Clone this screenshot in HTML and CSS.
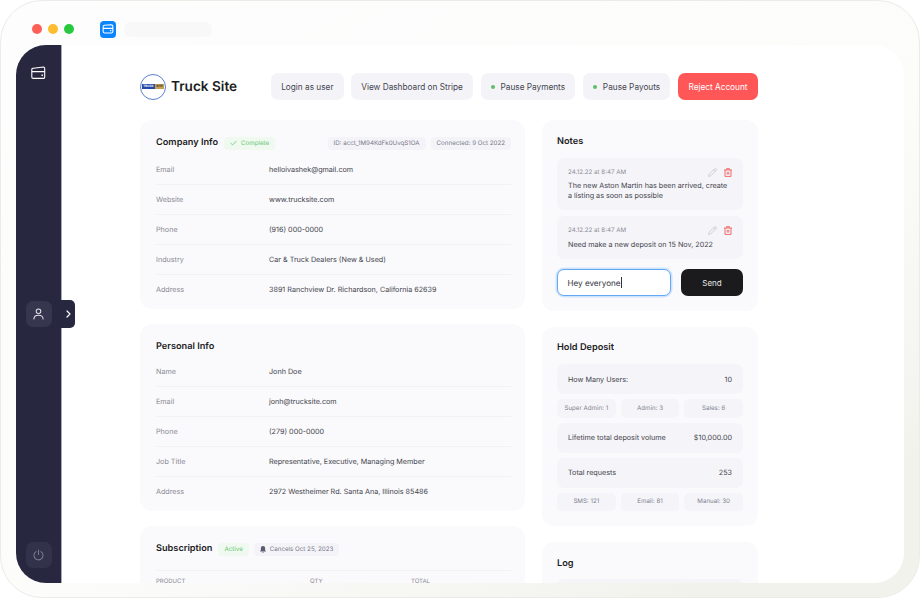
FILE: index.html
```html
<!DOCTYPE html>
<html lang="en">
<head>
<meta charset="utf-8">
<title>Truck Site</title>
<link rel="stylesheet" href="styles.css">
</head>
<body>
<div class="frame">
  <div class="topbar">
    <span class="light red"></span><span class="light yellow"></span><span class="light green"></span>
    <span class="app-icon">
      <svg width="12" height="10" viewBox="0 0 14 12" fill="none" stroke="#fff" stroke-width="1.3"><path d="M2.5 1.5 L11 1 A1.8 1.8 0 0 1 12.8 2.8 V9 A1.8 1.8 0 0 1 11 10.7 H3 A1.8 1.8 0 0 1 1.2 9 V3.3 A1.8 1.8 0 0 1 2.5 1.5 Z M1.2 5.2 H12.8"/><path d="M9.5 8 H11" stroke-width="1.5"/></svg>
    </span>
    <span class="url"></span>
  </div>
  <div class="panel">
    <aside class="sidebar">
      <svg class="side-card" width="15" height="14" viewBox="0 0 15 14" fill="none" stroke="#fff" stroke-width="1.1"><path d="M2.4 2.2 L12.3 1 A1.4 1.4 0 0 1 13.7 2.4 V11 A1.4 1.4 0 0 1 12.3 12.4 H2.2 A1.4 1.4 0 0 1 .8 11 V3.6 A1.4 1.4 0 0 1 2.4 2.2 Z M.8 5.6 H13.7"/><path d="M10.5 9.3 H12" stroke-width="1.4"/></svg>
      <span class="tile">
        <svg width="11" height="12" viewBox="0 0 12 13" fill="none" stroke="#e4e4ee" stroke-width="1.1"><circle cx="6" cy="3.6" r="2.5"/><path d="M1 12 C1 9 3 7.8 6 7.8 C9 7.8 11 9 11 12" stroke-linecap="round"/></svg>
      </span>
      <span class="tile tile-dim">
        <svg width="11" height="12" viewBox="0 0 11 12" fill="none" stroke="#77778c" stroke-width="1.1" stroke-linecap="round"><path d="M5.5 1 V5.5"/><path d="M3 2.6 A4.5 4.5 0 1 0 8 2.6"/></svg>
      </span>
      <span class="side-tab">
        <svg width="5" height="8" viewBox="0 0 5 8" fill="none" stroke="#fff" stroke-width="1.2" stroke-linecap="round" stroke-linejoin="round"><path d="M1 1 L4 4 L1 7"/></svg>
      </span>
    </aside>
    <main class="content">
      <header class="head">
        <div class="brand">
          <span class="logo"><span class="logo-a">TRUCK</span><span class="logo-b">SITE</span></span>
          <span class="brand-name">Truck Site</span>
        </div>
        <nav class="actions">
          <button class="btn">Login as user</button>
          <button class="btn">View Dashboard on Stripe</button>
          <button class="btn btn-dot"><i class="dot"></i>Pause Payments</button>
          <button class="btn btn-dot"><i class="dot"></i>Pause Payouts</button>
          <button class="btn btn-red">Reject Account</button>
        </nav>
      </header>
      <div class="columns">
        <div class="col col-left">
          <section class="card card-company">
            <div class="card-head">
              <h2>Company Info</h2>
              <span class="tag tag-green"><svg width="7" height="6" viewBox="0 0 8 6" fill="none" stroke="#5fc56b" stroke-width=".9"><path d="M.7 3 L3 5.2 L7.3 .7"/></svg>Complete</span>
              <span class="tag tag-push">ID: acct_1M94KdFk0UvqS1OA</span>
              <span class="tag">Connected: 9 Oct 2022</span>
            </div>
            <div class="row"><span class="k">Email</span><span class="v">helloivashek@gmail.com</span></div>
            <div class="row"><span class="k">Website</span><span class="v">www.trucksite.com</span></div>
            <div class="row"><span class="k">Phone</span><span class="v">(916) 000-0000</span></div>
            <div class="row"><span class="k">Industry</span><span class="v">Car &amp; Truck Dealers (New &amp; Used)</span></div>
            <div class="row"><span class="k">Address</span><span class="v">3891 Ranchview Dr. Richardson, California 62639</span></div>
          </section>
          <section class="card card-personal">
            <div class="card-head"><h2>Personal Info</h2></div>
            <div class="row"><span class="k">Name</span><span class="v">Jonh Doe</span></div>
            <div class="row"><span class="k">Email</span><span class="v">jonh@trucksite.com</span></div>
            <div class="row"><span class="k">Phone</span><span class="v">(279) 000-0000</span></div>
            <div class="row"><span class="k">Job Title</span><span class="v">Representative, Executive, Managing Member</span></div>
            <div class="row"><span class="k">Address</span><span class="v">2972 Westheimer Rd. Santa Ana, Illinois 85486</span></div>
          </section>
          <section class="card card-sub">
            <div class="card-head">
              <h2>Subscription</h2>
              <span class="tag tag-green">Active</span>
              <span class="tag"><svg width="6" height="7" viewBox="0 0 7 8" fill="#5a5a70"><path d="M3.5 0 A2.5 2.5 0 0 1 6 2.6 V5 L7 6.2 H0 L1 5 V2.6 A2.5 2.5 0 0 1 3.5 0 Z M2.5 6.8 H4.5 L3.5 8 Z"/></svg>Cancels Oct 25, 2023</span>
            </div>
            <div class="sub-cols"><span>PRODUCT</span><span>QTY</span><span>TOTAL</span></div>
          </section>
        </div>
        <div class="col col-right">
          <section class="card card-notes">
            <h2>Notes</h2>
            <article class="note">
              <div class="note-top">
                <span class="note-time">24.12.22 at 8:47 AM</span>
                <svg class="pencil" width="9" height="9" viewBox="0 0 9 9" fill="none" stroke="#c4c4cc" stroke-width=".8"><path d="M.6 8.4 L1 6.4 L6.4 1 A1 1 0 0 1 8 2.6 L2.6 8 Z M5.6 1.8 L7.2 3.4"/></svg>
                <svg width="8" height="9" viewBox="0 0 8 9" fill="none" stroke="#f25f5f" stroke-width=".9"><path d="M0 2 H8 M2.6 2 V.6 H5.4 V2 M1 2 V8.4 H7 V2 M3.2 3.8 V6.6 M4.8 3.8 V6.6"/></svg>
              </div>
              <p>The new Aston Martin has been arrived, create a listing as soon as possible</p>
            </article>
            <article class="note">
              <div class="note-top">
                <span class="note-time">24.12.22 at 8:47 AM</span>
                <svg class="pencil" width="9" height="9" viewBox="0 0 9 9" fill="none" stroke="#c4c4cc" stroke-width=".8"><path d="M.6 8.4 L1 6.4 L6.4 1 A1 1 0 0 1 8 2.6 L2.6 8 Z M5.6 1.8 L7.2 3.4"/></svg>
                <svg width="8" height="9" viewBox="0 0 8 9" fill="none" stroke="#f25f5f" stroke-width=".9"><path d="M0 2 H8 M2.6 2 V.6 H5.4 V2 M1 2 V8.4 H7 V2 M3.2 3.8 V6.6 M4.8 3.8 V6.6"/></svg>
              </div>
              <p>Need make a new deposit on 15 Nov, 2022</p>
            </article>
            <div class="compose">
              <div class="input">Hey everyone<i class="caret"></i></div>
              <button class="send">Send</button>
            </div>
          </section>
          <section class="card card-hold">
            <h2>Hold Deposit</h2>
            <div class="stat"><span>How Many Users:</span><span>10</span></div>
            <div class="chips"><span>Super Admin: 1</span><span>Admin: 3</span><span>Sales: 6</span></div>
            <div class="stat"><span>Lifetime total deposit volume</span><span>$10,000.00</span></div>
            <div class="stat"><span>Total requests</span><span>253</span></div>
            <div class="chips"><span>SMS: 121</span><span>Email: 81</span><span>Manual: 30</span></div>
          </section>
          <section class="card card-log">
            <h2>Log</h2>
            <div class="stat"></div>
          </section>
        </div>
      </div>
    </main>
  </div>
</div>
</body>
</html>
```

FILE: styles.css
```css
* { box-sizing: border-box; }
html, body { margin: 0; padding: 0; height: 100%; background: #fff; overflow: hidden; }
body { font-family: Inter, "Liberation Sans", sans-serif; color: #1c1c1e; text-rendering: geometricPrecision; }

.frame {
  width: 920px; height: 598px; padding: 0 15px 14px 15px;
  display: flex; flex-direction: column;
  border: 1px solid #ebebe8; border-radius: 42px;
  background: linear-gradient(150deg, #fdfdfd 0%, #fcfcfb 55%, #f2f2ed 88%);
  overflow: hidden;
}
.topbar { height: 44px; flex: none; display: flex; align-items: center; padding: 12px 0 0 16px; }
.light { width: 10px; height: 10px; border-radius: 50%; margin-right: 6px; }
.red { background: #fe5f57; }
.yellow { background: #febc2e; }
.green { background: #28c840; }
.app-icon { width: 16px; height: 17px; margin-left: 20px; border-radius: 4px; background: #0a84ff; display: flex; align-items: center; justify-content: center; }
.url { width: 88px; height: 15px; margin-left: 8px; border-radius: 7px; background: #f8f8f8; }

.panel { position: relative; flex: 1; min-height: 0; display: flex; background: #fff; border-radius: 30px; overflow: hidden; }

.sidebar {
  position: relative; z-index: 1; width: 46px; flex: none;
  display: flex; flex-direction: column; align-items: center; justify-content: space-between;
  padding: 21px 0 15px; background: #27273f; border-right: 1px solid #a9a9bd; overflow: visible;
}
.side-card { margin-bottom: 6px; }
.tile { width: 26px; height: 26px; border-radius: 7px; background: #36364f; display: flex; align-items: center; justify-content: center; }
.tile-dim { background: #32324a; }
.side-tab {
  position: absolute; left: 45px; top: 255px; width: 14px; height: 28px;
  border-radius: 0 5px 5px 0; background: #27273f;
  display: flex; align-items: center; justify-content: center;
}

.content { flex: 1; min-width: 0; padding: 28px 0 0 78px; overflow: hidden; }

.head { width: 618px; display: flex; align-items: center; justify-content: space-between; height: 27px; margin-bottom: 20px; }
.brand { display: flex; align-items: center; gap: 5px; white-space: nowrap; }
.logo { width: 26px; height: 26px; border-radius: 50%; border: 1px solid #5c7fd0; background: #fff; display: flex; align-items: center; justify-content: center; font-size: 3px; font-weight: 700; line-height: 5px; white-space: nowrap; flex: none; }
.logo-a { background: #2348a8; color: #fff; width: 13px; text-align: center; }
.logo-b { background: #c6a052; color: #333; width: 9px; text-align: center; }
.brand-name { font-size: 13.6px; font-weight: 600; }
.actions { display: flex; gap: 7.75px; }
.btn { height: 27px; padding: 0 10px; border: 0; border-radius: 7px; background: #f4f4f8; color: #44444f; font: 400 8.25px Inter, sans-serif; white-space: nowrap; display: flex; align-items: center; }
.btn-dot { padding: 0 10px; }
.dot { width: 4px; height: 4px; border-radius: 50%; background: #5fbf68; margin-right: 6px; }
.btn-red { background: #ff5757; color: #fff; padding: 0 10.5px; }

.columns { display: flex; gap: 17px; align-items: flex-start; width: 618px; }
.col { display: flex; flex-direction: column; }
.col-left { width: 385px; gap: 15px; }
.col-right { width: 216px; gap: 16px; }
.card { background: #fafafc; border-radius: 12px; padding: 15px; }
.col-left .card { padding: 16px 14px 0 16px; }
h2 { margin: 0; font-size: 9.2px; font-weight: 600; color: #1c1c1e; line-height: 14px; white-space: nowrap; }

.card-head { display: flex; align-items: center; gap: 5px; height: 14px; }
.tag { height: 13px; padding: 0 6px; border-radius: 4px; background: #f4f4f8; color: #77778a; font-size: 6.2px; display: flex; align-items: center; gap: 4px; white-space: nowrap; }
.tag-green { background: #eff9f0; color: #66c671; }
.tag-push { margin-left: auto; }
.card-company h2 { margin-right: 1px; }

.row { display: flex; align-items: center; height: 30px; border-bottom: 1px solid #f2f2f5; font-size: 7.2px; }
.row:last-child { border-bottom-color: transparent; }
.k { width: 113px; color: #8a8a94; }
.v { color: #44444c; }
.card-company { height: 189px; }
.card-company .card-head { margin-bottom: 5px; }
.card-personal { height: 187px; }
.card-personal .card-head { margin-bottom: 3px; }

.card-sub { height: 80px; }
.card-sub .card-head { margin-bottom: 14px; }
.card-sub h2 { margin-right: 1px; }
.sub-cols { display: grid; grid-template-columns: 154px 101px 1fr; border-top: 1px solid #f2f2f5; padding-top: 7px; font-size: 6px; color: #8a8a94; }

.card-notes { height: 191px; }
.card-notes h2 { margin-bottom: 9px; }
.note { background: #f5f5f9; border-radius: 7px; padding: 8.5px 11px 10px; margin-bottom: 6px; }
.note-top { display: flex; align-items: center; gap: 7px; height: 11px; margin-bottom: 3.75px; }
.note-time { margin-right: auto; font-size: 6.2px; color: #8c8c96; }
.note p { margin: 0; font-size: 7.2px; line-height: 9.5px; color: #44444c; }
.compose { display: flex; gap: 10px; margin-top: 10px; }
.input { width: 114px; height: 27px; border-radius: 7px; background: #fff; border: 1.5px solid #63a9f5; box-shadow: 0 0 0 1.5px #cfe4fb; padding: 0 9.5px; font-size: 8.1px; color: #33333d; display: flex; align-items: center; }
.caret { width: 1px; height: 11px; background: #333; margin-left: .5px; }
.send { flex: 1; height: 27px; border: 0; border-radius: 7px; background: #1b1b1d; color: #e6e6e6; font: 400 8px Inter, sans-serif; }

.card-hold { height: 199px; }
.card-hold h2 { margin-bottom: 9px; margin-top: -1px; }
.card-log h2 { margin-bottom: 8px; }
.stat { height: 30px; border-radius: 7px; background: #f5f5f9; padding: 0 11px; display: flex; align-items: center; justify-content: space-between; font-size: 7.2px; color: #44444c; margin-bottom: 5px; }
.chips { display: grid; grid-template-columns: repeat(3, 1fr); gap: 5px; margin-bottom: 5px; }
.chips span { height: 18.5px; border-radius: 5px; background: #f5f5f9; color: #80808f; font-size: 6.2px; display: flex; align-items: center; justify-content: center; white-space: nowrap; }
.card-log { height: 80px; }
```
